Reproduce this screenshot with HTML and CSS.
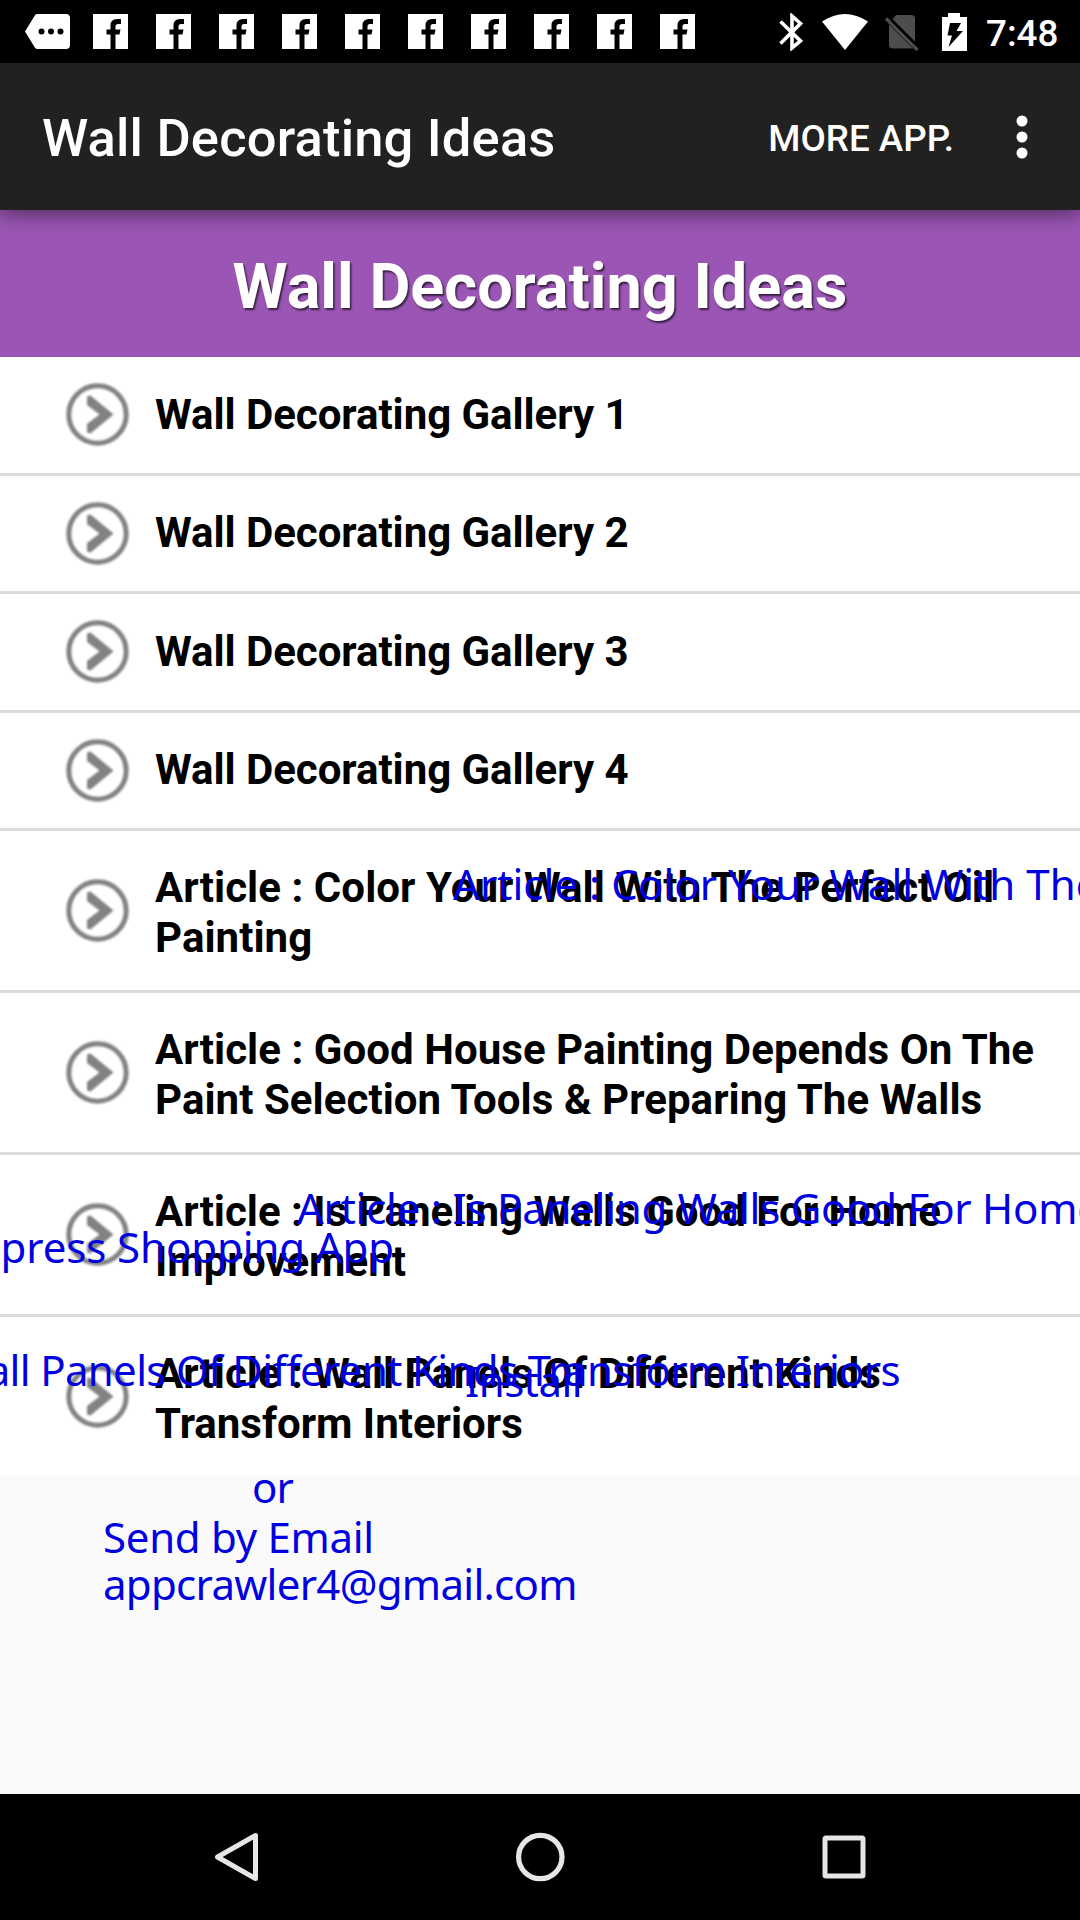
FILE: index.html
```html
<!DOCTYPE html>
<html lang="en">
<head>
<meta charset="utf-8">
<title>Wall Decorating Ideas</title>
<link rel="stylesheet" href="styles.css">
</head>
<body>
<svg class="defs" width="0" height="0" aria-hidden="true">
  <symbol id="fb" viewBox="0 0 35 35"><path fill="#fff" d="M0 0H35V35H22.500V20.500H26.500L27.500 15.500H22.500V12.500Q22.500 10 25 10H28V5H24Q17.500 5 17.500 11.500V15.500H13.500V20.500H17.500V35H0Z"/></symbol>
  <symbol id="go" viewBox="0 0 63 63"><circle cx="31.500" cy="31.500" r="28.700" fill="none" stroke="#828282" stroke-width="5"/><path fill="#828282" d="M21 13.500L24.500 12.500L47.500 31.500L24.500 50.500L21 49.500V41L33.500 31.500L21 22Z"/></symbol>
</svg>
<div class="screen">
  <header class="status">
    <div class="notifications">
      <svg class="tag" viewBox="0 0 45 35"><path fill="#fff" d="M12 0H41Q45 0 45 4V31Q45 35 41 35H12Q10.500 35 9.500 33L0 17.500L9.500 2Q10.500 0 12 0Z"/><g fill="#000"><circle cx="16.500" cy="17.500" r="3"/><circle cx="26" cy="17.500" r="3"/><circle cx="35.500" cy="17.500" r="3"/></g></svg>
      <svg class="fb"><use href="#fb"/></svg><svg class="fb"><use href="#fb"/></svg><svg class="fb"><use href="#fb"/></svg><svg class="fb"><use href="#fb"/></svg><svg class="fb"><use href="#fb"/></svg><svg class="fb"><use href="#fb"/></svg><svg class="fb"><use href="#fb"/></svg><svg class="fb"><use href="#fb"/></svg><svg class="fb"><use href="#fb"/></svg><svg class="fb"><use href="#fb"/></svg>
    </div>
    <svg class="system" viewBox="0 0 190 38">
      <path d="M1.500 8.500L21.500 28L13 35V3L21.500 10.500L1.500 30.500" fill="none" stroke="#fff" stroke-width="3.600"/>
      <path d="M43 8.500Q66 -6.500 89 8.500L66 37Z" fill="#fff"/>
      <path d="M117 2H132Q136 2 136 6V32.500L112 8Z" fill="#4d4d4d"/><path d="M110 11.500L134 35.500H114Q110 35.500 110 31.500Z" fill="#4d4d4d"/><path d="M107 5.500L138.500 37" stroke="#4d4d4d" stroke-width="3.400"/><path d="M112.500 7L137 31.500" stroke="#000" stroke-width="2.600"/>
      <path d="M163 4H169V0H181V4H188V38H163Z" fill="#fff"/><path d="M171 10H182L177.500 18H184L169.500 34L173 22.500H168.500Z" fill="#000"/>
    </svg>
    <span class="clock">7:48</span>
  </header>
  <div class="appbar">
    <h1 class="title">Wall Decorating Ideas</h1>
    <span class="more">MORE APP.</span>
    <svg class="dots" viewBox="0 0 12 44" fill="#fff"><circle cx="6" cy="6" r="5.500"/><circle cx="6" cy="22" r="5.500"/><circle cx="6" cy="38" r="5.500"/></svg>
  </div>
  <main class="page">
    <h2 class="banner">Wall Decorating Ideas</h2>
    <ul class="list">
      <li class="row"><svg class="go"><use href="#go"/></svg><span>Wall Decorating Gallery 1</span></li>
      <li class="row"><svg class="go"><use href="#go"/></svg><span>Wall Decorating Gallery 2</span></li>
      <li class="row"><svg class="go"><use href="#go"/></svg><span>Wall Decorating Gallery 3</span></li>
      <li class="row"><svg class="go"><use href="#go"/></svg><span>Wall Decorating Gallery 4</span></li>
      <li class="row tall"><svg class="go"><use href="#go"/></svg><span>Article : Color Your Wall With The Perfect Oil<br>Painting</span></li>
      <li class="row tall"><svg class="go"><use href="#go"/></svg><span>Article : Good House Painting Depends On The<br>Paint Selection Tools &amp; Preparing The Walls</span></li>
      <li class="row tall snug"><svg class="go"><use href="#go"/></svg><span>Article : Is Paneling Walls Good For Home<br>Improvement</span></li>
      <li class="row tall snug last"><svg class="go"><use href="#go"/></svg><span>Article : Wall Panels Of Different Kinds<br>Transform Interiors</span></li>
    </ul>
  </main>
  <nav class="nav">
    <svg viewBox="0 0 50 50"><path d="M42.500 3.500V46.500L4.500 25Z" fill="none" stroke="#e6e6e6" stroke-width="5" stroke-linejoin="round"/></svg>
    <svg viewBox="0 0 50 50"><circle cx="24.300" cy="25" r="21.700" fill="none" stroke="#e6e6e6" stroke-width="5.200"/></svg>
    <svg viewBox="0 0 50 50"><rect x="6" y="6" width="38" height="38" rx="1" fill="none" stroke="#e6e6e6" stroke-width="5" stroke-linejoin="round"/></svg>
  </nav>
  <span class="note note-color">Article : Color Your Wall With The</span>
  <span class="note note-panel">Article : Is Paneling Walls Good For Home</span>
  <span class="note note-shop">Express Shopping App</span>
  <span class="note note-kinds">Wall Panels Of Different Kinds Transform Interiors</span>
  <span class="note note-install">Install</span>
  <span class="note note-or">or</span>
  <span class="note note-send">Send by Email</span>
  <span class="note note-mail">appcrawler4@gmail.com</span>
</div>
</body>
</html>
```
FILE: styles.css
```css
* { box-sizing: border-box; margin: 0; padding: 0; }
body { font-family: Roboto, sans-serif; background: #fafafa; }
.defs { position: absolute; }
.screen { position: relative; display: flex; flex-direction: column; width: 1080px; height: 1920px; overflow: hidden; background: #fafafa; }
.status { display: flex; align-items: center; height: 63px; padding: 0 23px 0 25px; background: #000; }
.notifications { display: flex; gap: 28px; flex: 1; }
.tag { width: 45px; height: 35px; margin-right: -5px; }
.fb { width: 35px; height: 35px; }
.system { width: 190px; height: 38px; margin-right: 17px; }
.clock { width: 71px; font-size: 36.750px; font-weight: 500; line-height: 63px; padding-top: 3px; color: #fff; white-space: nowrap; }
.appbar { z-index: 1; display: flex; align-items: center; height: 147px; padding: 0 52px 0 42px; color: #fff; background: #212121; box-shadow: 0 5px 18px rgba(0, 0, 0, .45); }
.title { flex: 1; font-size: 52.500px; font-weight: 500; line-height: 62px; padding-top: 3px; letter-spacing: .18px; }
.more { font-size: 36.750px; font-weight: 500; margin-right: 62px; padding-top: 3px; }
.dots { width: 12px; height: 44px; margin-top: 0; }
.page { flex: 1; }
.banner { height: 147px; font-size: 63px; font-weight: 700; line-height: 147px; padding-top: 3px; text-align: center; color: #fff; background: #9b56b5; text-shadow: 1.500px 1.500px 2px rgba(0, 0, 0, .65); }
.list { list-style: none; background: #fff; }
.row { display: flex; align-items: center; gap: 26px; height: 118.500px; padding-left: 66px; border-bottom: 3px solid #dadada; font-size: 42px; font-weight: 700; line-height: 49.500px; letter-spacing: -.05px; color: #000; white-space: nowrap; }
.row span { margin-top: -1px; }
.tall { height: 162px; letter-spacing: .05px; }
.tall span { margin-top: 4px; }
.snug { letter-spacing: 0; }
.last { height: 159px; border-bottom: 0; }
.go { width: 63px; height: 63px; flex: none; filter: blur(.8px); }
.nav { display: flex; align-items: center; justify-content: space-around; height: 126px; padding: 0 86px; background: #000; }
.nav svg { width: 50px; height: 50px; transform: translateX(1px); }
.note { position: absolute; font-family: "Noto Sans", sans-serif; font-size: 42px; line-height: 58px; color: #0000e0; white-space: nowrap; }
.note-color { left: 453px; top: 855px; letter-spacing: .04px; }
.note-panel { left: 297px; top: 1179px; letter-spacing: -.250px; }
.note-shop { right: 686px; top: 1218px; letter-spacing: -.100px; }
.note-kinds { right: 180px; top: 1341px; letter-spacing: -.660px; }
.note-install { left: 465px; top: 1352px; letter-spacing: -.500px; }
.note-or { left: 252px; top: 1458px; letter-spacing: -1px; }
.note-send { left: 103px; top: 1508px; letter-spacing: -.300px; }
.note-mail { left: 103px; top: 1555px; letter-spacing: -.700px; }
```
